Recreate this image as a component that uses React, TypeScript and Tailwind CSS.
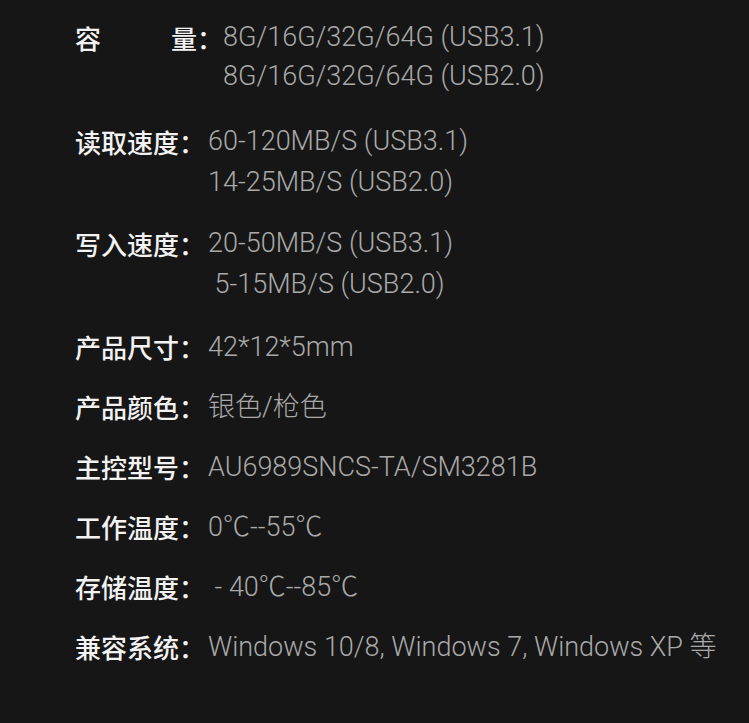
const specs: { label: string; values: string[]; extra?: string }[] = [
  { label: '读取速度：', values: ['60-120MB/S (USB3.1)', '14-25MB/S (USB2.0)'], extra: 'mt-[5px] leading-[41px]' },
  { label: '写入速度：', values: ['20-50MB/S (USB3.1)', ' 5-15MB/S (USB2.0)'], extra: 'leading-[41px]' },
  { label: '产品尺寸：', values: ['42*12*5mm'], extra: 'mt-[2px]' },
  { label: '产品颜色：', values: ['银色/枪色'] },
  { label: '主控型号：', values: ['AU6989SNCS-TA/SM3281B'] },
  { label: '工作温度：', values: ['0℃--55℃'] },
  { label: '存储温度：', values: [' - 40℃--85℃'] },
  { label: '兼容系统：', values: ['Windows 10/8, Windows 7, Windows XP 等'] },
]

const labelFont = "font-['Noto_Sans_CJK_SC',sans-serif] font-medium text-[26px] text-[#f2f2f2]"
const valueFont =
  "font-['Roboto','Noto_Sans_CJK_SC',sans-serif] font-light text-[27px] text-[#a9a9a9] whitespace-pre"

export default function App() {
  return (
    <div className="w-[749px] h-[723px] bg-[#161616] overflow-hidden">
      <div className="flex flex-col gap-[20px] pl-[75px] pt-[18px] leading-[40px]">
        <div className="flex leading-[39px]">
          <div className={`${labelFont} flex w-[148px]`}>
            <span>容</span>
            <span className="ml-auto">量：</span>
          </div>
          <div className="flex flex-col">
            <span className={valueFont}>8G/16G/32G/64G (USB3.1)</span>
            <span className={valueFont}>8G/16G/32G/64G (USB2.0)</span>
          </div>
        </div>

        {specs.map((s) => (
          <div key={s.label} className={`flex ${s.extra ?? ''}`}>
            <div className={`${labelFont} w-[133px] shrink-0`}>{s.label}</div>
            <div className="flex flex-col">
              {s.values.map((v) => (
                <span key={v} className={valueFont}>
                  {v}
                </span>
              ))}
            </div>
          </div>
        ))}
      </div>
    </div>
  )
}
